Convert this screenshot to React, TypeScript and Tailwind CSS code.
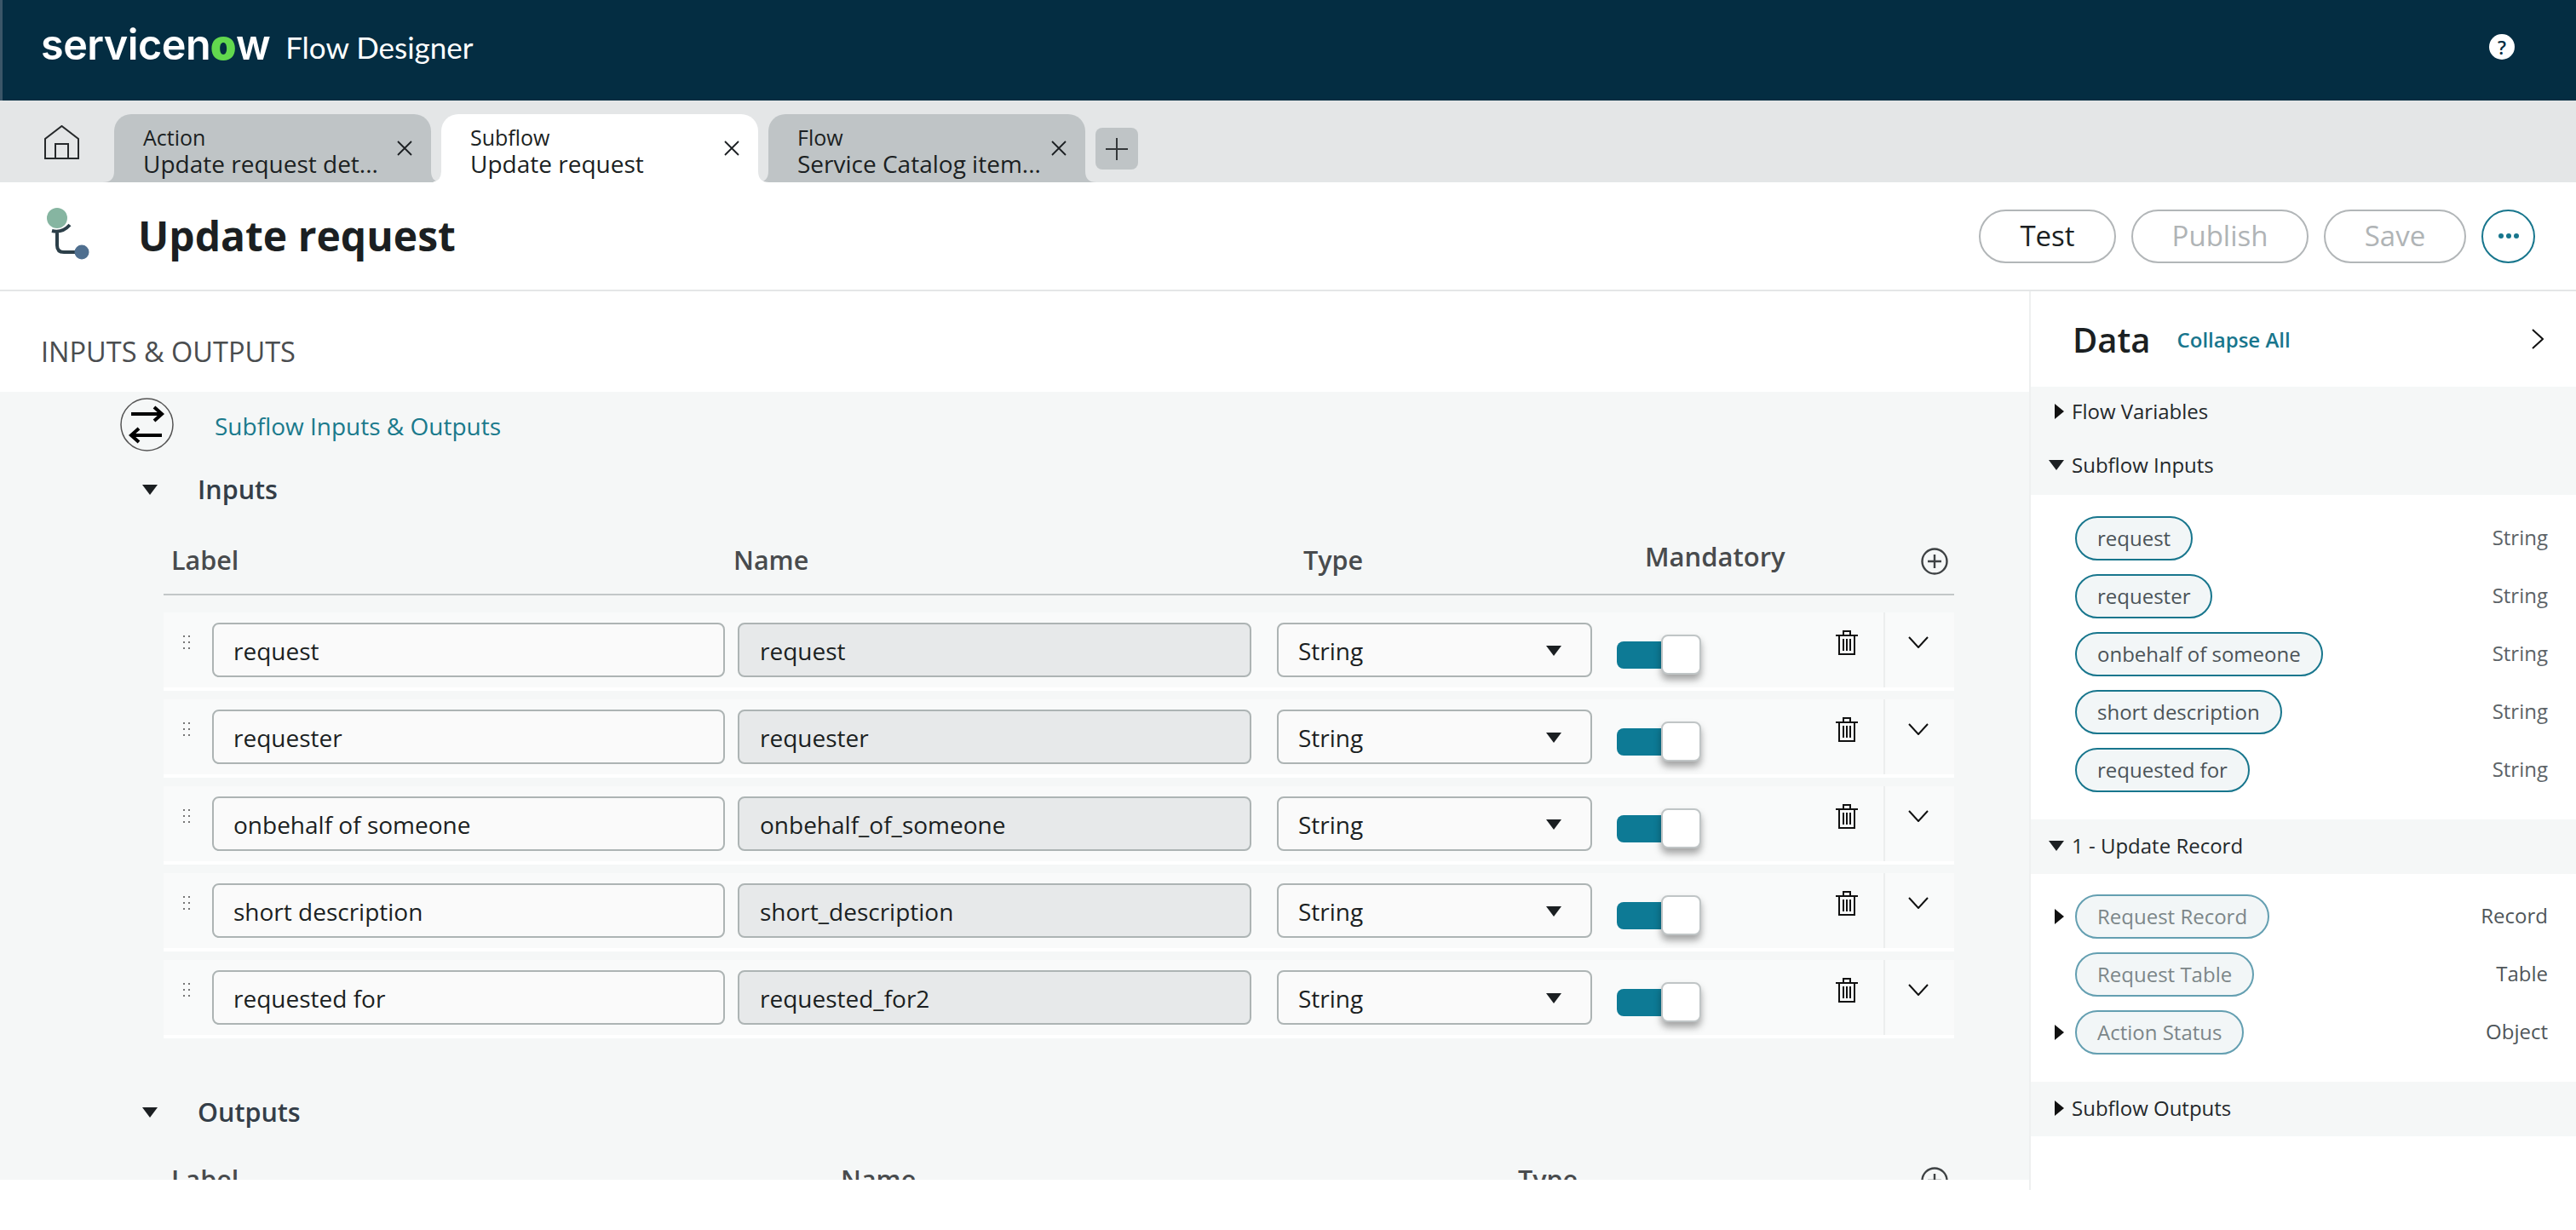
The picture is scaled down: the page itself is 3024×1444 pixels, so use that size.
import type { ReactNode } from 'react'

const inputs = [
  { label: 'request', name: 'request' },
  { label: 'requester', name: 'requester' },
  { label: 'onbehalf of someone', name: 'onbehalf_of_someone' },
  { label: 'short description', name: 'short_description' },
  { label: 'requested for', name: 'requested_for2' },
]

function CloseIcon() {
  return (
    <svg width="18" height="18" viewBox="0 0 18 18" className="shrink-0">
      <path d="M1 1 17 17M17 1 1 17" stroke="#1b1f22" strokeWidth="1.8" fill="none" />
    </svg>
  )
}

function Flare({ side, color }: { side: 'left' | 'right'; color: string }) {
  return side === 'left' ? (
    <svg width="13" height="13" viewBox="0 0 13 13" className="absolute bottom-0 -left-[13px]">
      <path d="M13 0V13H0Q13 13 13 0Z" fill={color} />
    </svg>
  ) : (
    <svg width="13" height="13" viewBox="0 0 13 13" className="absolute bottom-0 -right-[13px]">
      <path d="M0 0V13H13Q0 13 0 0Z" fill={color} />
    </svg>
  )
}

function Tab({ kind, title, active }: { kind: string; title: string; active?: boolean }) {
  const color = active ? '#ffffff' : '#bfc4c6'
  return (
    <div className={`relative flex w-[372px] items-center rounded-t-[20px] pl-[34px] pr-[22px] ${active ? 'z-10 bg-white' : 'bg-[#bfc4c6]'}`}>
      <Flare side="left" color={color} />
      <Flare side="right" color={color} />
      <div className="min-w-0 flex-1 whitespace-nowrap pt-[6px] text-[#1b1f22]">
        <div className="text-[25px] font-medium leading-[30px]">{kind}</div>
        <div className="text-[28px] leading-[32px]">{title}</div>
      </div>
      <CloseIcon />
    </div>
  )
}

function PillButton({ children, width, muted }: { children: ReactNode; width: string; muted?: boolean }) {
  return (
    <div className={`flex h-[63px] items-center justify-center rounded-full border-2 border-[#b2b6b8] text-[33px] ${width} ${muted ? 'text-[#b0b4b6]' : 'text-[#1b1f22]'}`}>
      {children}
    </div>
  )
}

function CaretDown({ className = '' }: { className?: string }) {
  return (
    <svg width="18" height="12" viewBox="0 0 18 12" className={className}>
      <path d="M0 0H18L9 12Z" fill="#1b1f22" />
    </svg>
  )
}

function CaretRight() {
  return (
    <svg width="11" height="18" viewBox="0 0 11 18" className="shrink-0">
      <path d="M0 0 11 9 0 18Z" fill="#111" />
    </svg>
  )
}

function CirclePlus() {
  return (
    <svg width="32" height="32" viewBox="0 0 32 32" className="mt-[3px]">
      <circle cx="16" cy="16" r="14.5" fill="none" stroke="#3e4244" strokeWidth="2.4" />
      <path d="M16 8V24M8 16H24" stroke="#3e4244" strokeWidth="2.4" />
    </svg>
  )
}

function TableHeader({ label, name, type, mandatory }: { label: string; name: string; type: string; mandatory?: boolean }) {
  return (
    <div className="flex h-[78px] items-center border-b-2 border-[#c2c7c8] pb-[3px] pl-[9px] text-[30.5px] font-semibold text-[#484b4d]">
      <div className={label}>Label</div>
      <div className={name}>Name</div>
      <div className={type}>Type</div>
      {mandatory && <div className="mb-[8px] w-[324px] text-[31px]">Mandatory</div>}
      <CirclePlus />
    </div>
  )
}

function InputRow({ label, name }: { label: string; name: string }) {
  return (
    <div className="mb-[10px] flex h-[92px] border-b-4 border-white bg-[#f9fafa]">
      <svg width="9" height="16" viewBox="0 0 9 16" className="ml-[23px] mr-[25px] mt-[27px] shrink-0">
        {[1, 7].map(x =>
          [1, 8, 15].map(y => <rect key={`${x}-${y}`} x={x - 1} y={y - 1} width="2" height="2" fill="#777" />),
        )}
      </svg>
      <div className="mt-[12px] flex h-[64px] w-[602px] items-center rounded-[8px] border-2 border-[#adb4b4] bg-[#fafafa] pl-[23px] pt-[2px] text-[28px] text-[#1b1f22]">
        {label}
      </div>
      <div className="ml-[15px] mt-[12px] flex h-[64px] w-[603px] items-center rounded-[8px] border-2 border-[#adb4b4] bg-[#e7e9ea] pl-[24px] pt-[2px] text-[28px] text-[#1b1f22]">
        {name}
      </div>
      <div className="ml-[30px] mt-[12px] flex h-[64px] w-[370px] items-center justify-between rounded-[8px] border-2 border-[#adb4b4] bg-[#fafafa] pl-[23px] pr-[34px] pt-[2px] text-[28px] text-[#1b1f22]">
        String
        <CaretDown />
      </div>
      <div className="ml-[29px] mt-[26px] flex h-[47px] items-center">
        <div className="h-[32px] w-[52px] rounded-l-[8px] bg-[#0d7a95]" />
        <div className="h-[47px] w-[47px] rounded-[8px] border-2 border-[#c0c5c6] bg-white shadow-[0_6px_8px_rgba(0,0,0,0.35)]" />
      </div>
      <svg width="28" height="29" viewBox="0 0 28 29" className="ml-[157px] mt-[21px] shrink-0">
        <path d="M1 6H27M10 6V1H18V6M5 6V28H23V6M10 10V24M14 10V24M18 10V24" fill="none" stroke="#111" strokeWidth="2" />
      </svg>
      <div className="ml-[29px] w-[2px] bg-[#eceeee]" />
      <svg width="24" height="14" viewBox="0 0 24 14" className="ml-[27px] mt-[28px] shrink-0">
        <path d="M1 1 12 13 23 1" fill="none" stroke="#111" strokeWidth="2" />
      </svg>
    </div>
  )
}

function Chip({ text, type, caret, dim }: { text: string; type: string; caret?: boolean; dim?: boolean }) {
  return (
    <div className="flex h-[68px] items-center pl-[28px] pr-[33px]">
      <div className="w-[24px] shrink-0">{caret && <CaretRight />}</div>
      <div
        className={`flex h-[52px] items-center rounded-full border-2 bg-[#f2f6f7] px-[24px] text-[24px] ${
          dim ? 'border-[#649fb1] text-[#7c8689]' : 'border-[#18768d] text-[#4b5358]'
        }`}
      >
        {text}
      </div>
      <div className={`ml-auto pb-[3px] text-[24px] ${dim ? 'text-[#4f565a]' : 'text-[#5c6367]'}`}>{type}</div>
    </div>
  )
}

function GroupTitle({ text, open, height }: { text: string; open?: boolean; height: string }) {
  return (
    <div className={`flex items-center pb-[3px] text-[24px] text-[#23282b] ${height}`}>
      <div className="flex w-[48px] shrink-0 justify-end pr-[9px]">
        {open ? <CaretDown /> : <CaretRight />}
      </div>
      {text}
    </div>
  )
}

export default function App() {
  return (
    <div className="flex h-[1444px] w-[3024px] flex-col overflow-hidden bg-white font-['Open_Sans',sans-serif]">
      <header className="flex h-[118px] shrink-0 items-center justify-between border-l-[3px] border-[#3b5668] bg-[#042d42] pl-[45px] pr-[72px]">
        <div className="flex items-center pb-[12px] text-white">
          <span className="font-['Inter',sans-serif] text-[48.5px] font-semibold tracking-[-0.5px]">
            servicen<span className="font-black text-[#62d84e]">o</span>w
          </span>
          <span className="ml-[18px] pt-[4px] font-['Lato',sans-serif] text-[35px]">Flow Designer</span>
        </div>
        <div className="mb-[8px] flex h-[30px] w-[30px] items-center justify-center rounded-full bg-white text-[22px] font-semibold leading-none text-[#042d42]">
          ?
        </div>
      </header>

      <div className="flex h-[96px] shrink-0 bg-[#e4e6e7] pt-[16px]">
        <div className="w-[134px] shrink-0 pl-[52px] pt-[13px]">
          <svg width="41" height="40" viewBox="0 0 41 40">
            <path d="M1 39V16L20.5 1 40 16V39ZM13 39V22H28V39" fill="none" stroke="#26292b" strokeWidth="2" />
          </svg>
        </div>
        <div className="flex gap-[12px]">
          <Tab kind="Action" title="Update request det..." />
          <Tab kind="Subflow" title="Update request" active />
          <Tab kind="Flow" title="Service Catalog item..." />
        </div>
        <div className="ml-[12px] mt-[16px] flex h-[49px] w-[50px] items-center justify-center rounded-[8px] bg-[#bfc4c6]">
          <svg width="26" height="26" viewBox="0 0 26 26">
            <path d="M13 0V26M0 13H26" stroke="#34383a" strokeWidth="2" />
          </svg>
        </div>
      </div>

      <div className="flex h-[128px] shrink-0 items-center border-b-2 border-[#e4e6e7] pb-[2px] pl-[54px] pr-[48px] pt-[2px]">
        <svg width="52" height="62" viewBox="0 0 52 62" className="mb-[4px] shrink-0">
          <path d="M7 27Q19 30 28 20M13 28V44Q13 52 21 52H38" fill="none" stroke="#2c3f49" strokeWidth="4" />
          <circle cx="13" cy="12" r="12" fill="#86b5a1" />
          <circle cx="42" cy="52" r="8.5" fill="#4f6f8f" />
        </svg>
        <h1 className="ml-[56px] text-[48px] font-bold text-[#1b1f22]">Update request</h1>
        <div className="ml-auto flex items-center gap-[18px]">
          <PillButton width="w-[161px]">Test</PillButton>
          <PillButton width="w-[208px]" muted>Publish</PillButton>
          <PillButton width="w-[167px]" muted>Save</PillButton>
          <div className="flex h-[63px] w-[63px] items-center justify-center gap-[3px] rounded-full border-2 border-[#18768d]">
            <span className="h-[6px] w-[6px] rounded-full bg-[#18768d]" />
            <span className="h-[6px] w-[6px] rounded-full bg-[#18768d]" />
            <span className="h-[6px] w-[6px] rounded-full bg-[#18768d]" />
          </div>
        </div>
      </div>

      <div className="flex min-h-0 flex-1">
        <main className="w-[2382px] shrink-0">
          <div className="flex h-[118px] items-center pl-[48px] pt-[24px] text-[32.5px] text-[#4a4d4f]">INPUTS &amp; OUTPUTS</div>
          <div className="h-[925px] overflow-hidden bg-[#f5f7f7] pt-[7px]">
            <div className="flex items-center pl-[141px]">
              <svg width="63" height="63" viewBox="0 0 63 63" className="shrink-0">
                <circle cx="31.5" cy="31.5" r="30.5" fill="none" stroke="#555" strokeWidth="1.5" />
                <path d="M13 19H49M40 11 49 19 40 27M49 44H13M22 36 13 44 22 52" fill="none" stroke="#000" strokeWidth="4" />
              </svg>
              <a className="ml-[48px] pt-[3px] text-[28px] text-[#1a7a8c]">Subflow Inputs &amp; Outputs</a>
            </div>

            <div className="mt-[25px] flex h-[40px] items-center pl-[167px] text-[30.5px] font-semibold text-[#343e48]">
              <CaretDown />
              <span className="ml-[47px]">Inputs</span>
            </div>
            <div className="ml-[192px] mt-[26px] w-[2102px]">
              <TableHeader label="w-[660px]" name="w-[669px]" type="w-[401px]" mandatory />
              <div className="mt-[20px]">
                {inputs.map(row => (
                  <InputRow key={row.name} label={row.label} name={row.name} />
                ))}
              </div>
            </div>

            <div className="mt-[67px] flex h-[40px] items-center pl-[167px] text-[30.5px] font-semibold text-[#343e48]">
              <CaretDown />
              <span className="ml-[47px]">Outputs</span>
            </div>
            <div className="ml-[192px] mt-[22px] w-[2102px]">
              <TableHeader label="w-[786px]" name="w-[795px]" type="w-[473px]" />
            </div>
          </div>
        </main>

        <aside className="h-[1055px] flex-1 border-l-2 border-[#eef0f0]">
          <div className="flex h-[112px] items-center pl-[49px] pr-[38px]">
            <div className="pt-[2px] text-[40px] font-semibold leading-none text-[#1b1f22]">Data</div>
            <div className="ml-[31px] pt-[2px] text-[24px] font-semibold text-[#18768d]">Collapse All</div>
            <svg width="14" height="24" viewBox="0 0 14 24" className="ml-auto">
              <path d="M1 1 13 12 1 23" fill="none" stroke="#111" strokeWidth="2" />
            </svg>
          </div>
          <div className="bg-[#f5f7f7]">
            <GroupTitle text="Flow Variables" height="h-[60px]" />
            <GroupTitle text="Subflow Inputs" height="h-[67px]" open />
          </div>
          <div className="pb-[24px] pt-[17px]">
            <Chip text="request" type="String" />
            <Chip text="requester" type="String" />
            <Chip text="onbehalf of someone" type="String" />
            <Chip text="short description" type="String" />
            <Chip text="requested for" type="String" />
          </div>
          <div className="bg-[#f5f7f7]">
            <GroupTitle text="1 - Update Record" height="h-[64px]" open />
          </div>
          <div className="pb-[24px] pt-[16px]">
            <Chip text="Request Record" type="Record" caret dim />
            <Chip text="Request Table" type="Table" dim />
            <Chip text="Action Status" type="Object" caret dim />
          </div>
          <div className="bg-[#f5f7f7]">
            <GroupTitle text="Subflow Outputs" height="h-[64px]" />
          </div>
        </aside>
      </div>
    </div>
  )
}
